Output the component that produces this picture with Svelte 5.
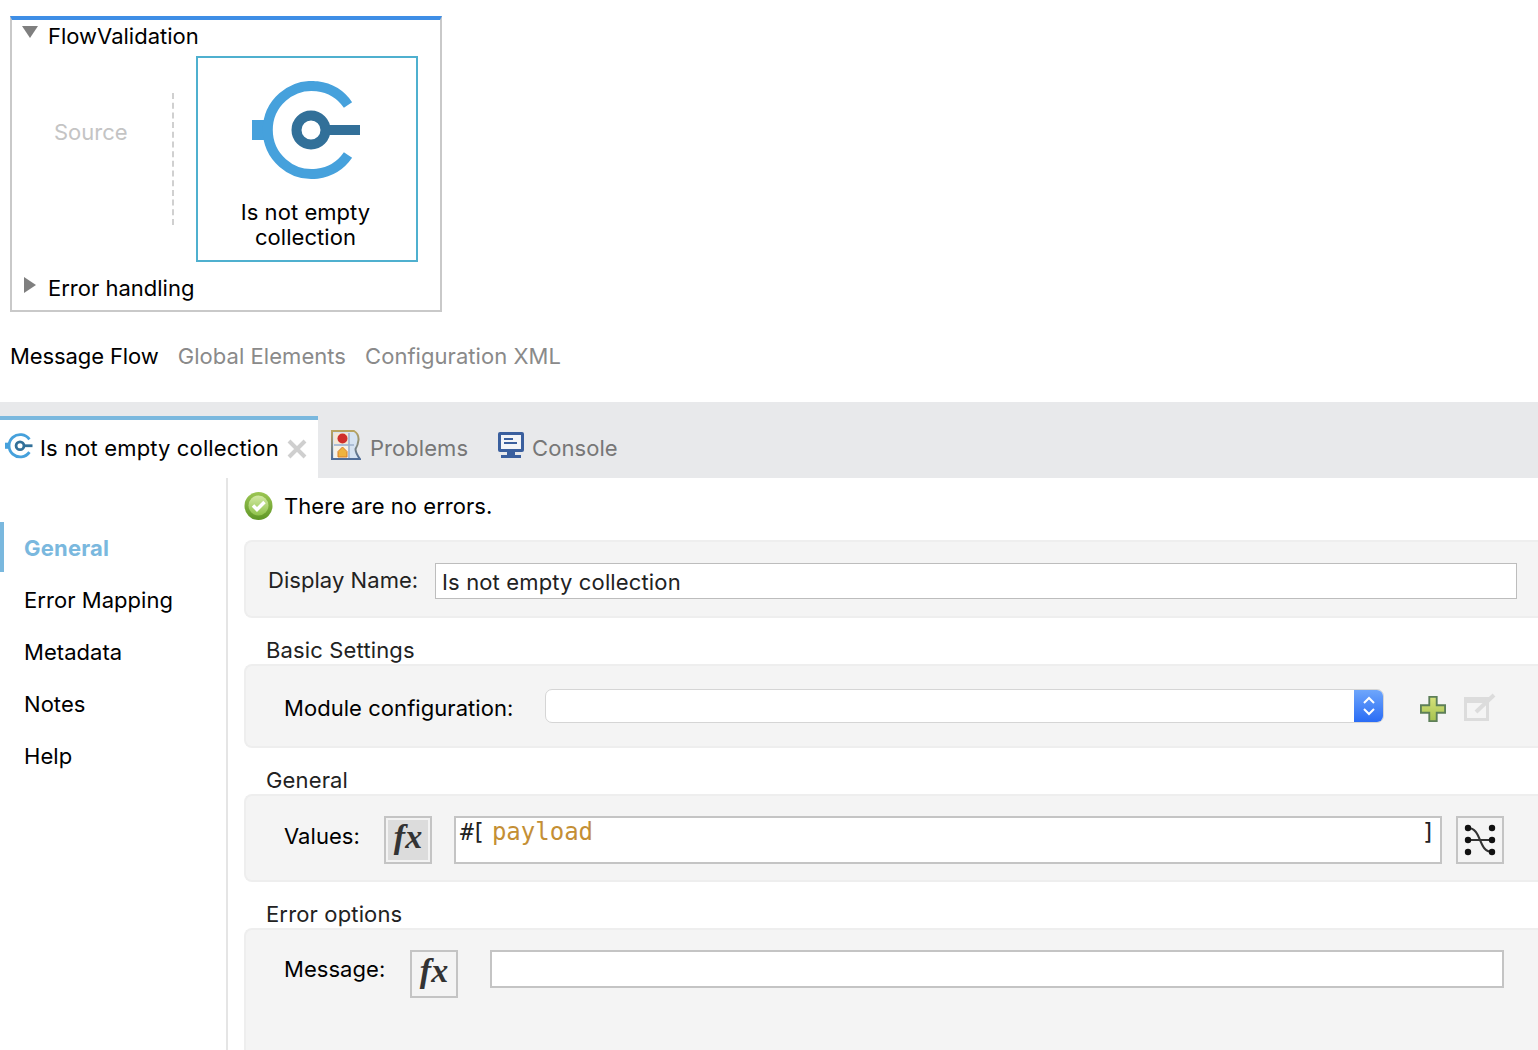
<script>
  const navItems = ["General", "Error Mapping", "Metadata", "Notes", "Help"];
</script>

<div class="page">
  <!-- flow canvas -->
  <div class="flow">
    <div class="flow-title">
      <svg class="tri" width="16" height="14" viewBox="0 0 16 14"><path d="M0 1h16L8 13z" fill="#7f7f7f" /></svg>
      <span>FlowValidation</span>
    </div>
    <div class="flow-body">
      <div class="source">Source</div>
      <div class="dashed"></div>
      <div class="node">
        <svg class="node-icon" width="110" height="100" viewBox="0 0 110 100">
          <rect x="0" y="39" width="12" height="20" fill="#46a1dc" />
          <path d="M96 24A44 44 0 1 0 96 74" fill="none" stroke="#46a1dc" stroke-width="10" />
          <circle cx="59" cy="49" r="14.500" fill="none" stroke="#327099" stroke-width="10" />
          <rect x="75" y="44" width="33" height="10" fill="#327099" />
        </svg>
        <div class="node-label">Is not empty<br />collection</div>
      </div>
    </div>
    <div class="flow-title error">
      <svg class="tri" width="14" height="16" viewBox="0 0 14 16"><path d="M1 0v16l12-8z" fill="#7f7f7f" /></svg>
      <span>Error handling</span>
    </div>
  </div>

  <div class="editor-tabs">
    <span class="active">Message Flow</span>
    <span>Global Elements</span>
    <span>Configuration XML</span>
  </div>

  <!-- properties panel -->
  <div class="tabbar">
    <div class="tab current">
      <svg class="tab-icon" width="28" height="26" viewBox="0 0 110 100">
        <rect x="0" y="37" width="14" height="24" fill="#46a1dc" />
        <path d="M96 24A44 44 0 1 0 96 74" fill="none" stroke="#46a1dc" stroke-width="11" />
        <circle cx="59" cy="49" r="15.500" fill="none" stroke="#327099" stroke-width="11" />
        <rect x="75" y="43.500" width="33" height="11" fill="#327099" />
      </svg>
      <span class="tab-label">Is not empty collection</span>
      <svg class="close" width="20" height="20" viewBox="0 0 20 20"><path d="M2 2l16 16M18 2L2 18" stroke="#cfcfcf" stroke-width="4" /></svg>
    </div>
    <div class="tab problems">
      <svg class="tab-icon" width="30" height="30" viewBox="0 0 30 30">
        <defs>
          <linearGradient id="probframe" x1="0" y1="0" x2="0" y2="1">
            <stop offset="0" stop-color="#b9a560" />
            <stop offset="1" stop-color="#4f6d99" />
          </linearGradient>
        </defs>
        <path d="M1 1h22q5 3 4.500 9-.5 5-3 9 0 4 4.500 10H1z" fill="#d6e3f1" stroke="url(#probframe)" stroke-width="2" />
        <rect x="3" y="3" width="14" height="11" fill="#f4e8d4" />
        <rect x="3" y="16" width="14" height="12" fill="#f7f2e6" />
        <path d="M18 3v25M3 15h20" stroke="#9fb3cc" stroke-width="1.500" />
        <circle cx="11.500" cy="8.500" r="5" fill="#cf2f2c" />
        <path d="M7 27v-5.500l4.500-4.500 4.500 4.500v5.500z" fill="#eeb33f" stroke="#d97f2a" stroke-width="1" />
      </svg>
      <span>Problems</span>
    </div>
    <div class="tab console">
      <svg class="tab-icon" width="28" height="28" viewBox="0 0 28 28">
        <rect x="1" y="1" width="26" height="20" rx="2" fill="#3a5f9e" />
        <rect x="4" y="4" width="20" height="14" fill="#f2f4f8" />
        <path d="M7 8h9M7 12h13" stroke="#3a5f9e" stroke-width="2" />
        <rect x="10" y="21" width="8" height="3" fill="#3a5f9e" />
        <rect x="4" y="24" width="20" height="3" fill="#3a5f9e" />
      </svg>
      <span>Console</span>
    </div>
  </div>

  <div class="panel">
    <nav class="sidebar">
      {#each navItems as item, i}
        <div class="nav-item" class:selected={i === 0}>{item}</div>
      {/each}
    </nav>

    <div class="content">
      <div class="status">
        <svg width="30" height="30" viewBox="0 0 30 30">
          <defs>
            <linearGradient id="okfill" x1="0" y1="0" x2="0" y2="1">
              <stop offset="0" stop-color="#9cc653" />
              <stop offset="1" stop-color="#5f9626" />
            </linearGradient>
            <linearGradient id="okinner" x1="0" y1="0" x2="0" y2="1">
              <stop offset="0" stop-color="#d3e9a4" />
              <stop offset="1" stop-color="#8fc24a" />
            </linearGradient>
          </defs>
          <circle cx="14.500" cy="15" r="14" fill="url(#okfill)" />
          <circle cx="14.500" cy="14.500" r="10" fill="url(#okinner)" />
          <path d="M9 14.500l4 4 7.500-7.500" fill="none" stroke="#fff" stroke-width="3.500" />
        </svg>
        <span>There are no errors.</span>
      </div>

      <section class="box name-box">
        <label class="name-label" for="display-name">Display Name:</label>
        <div class="text-input" id="display-name">Is not empty collection</div>
      </section>

      <h3>Basic Settings</h3>
      <section class="box module-box">
        <span class="field-label module-label">Module configuration:</span>
        <div class="select">
          <div class="select-btn">
            <svg width="16" height="24" viewBox="0 0 16 24"><path d="M3 9l5-5 5 5M3 15l5 5 5-5" fill="none" stroke="#fff" stroke-width="2" /></svg>
          </div>
        </div>
        <svg class="plus" width="26" height="26" viewBox="0 0 28 28">
          <defs>
            <linearGradient id="plusfill" x1="0" y1="0" x2="0" y2="1">
              <stop offset="0" stop-color="#d6e27c" />
              <stop offset="1" stop-color="#a6c24e" />
            </linearGradient>
          </defs>
          <path d="M10 1h8v9h9v8h-9v9h-8v-9H1v-8h9z" fill="url(#plusfill)" stroke="#5d7f58" stroke-width="2" />
        </svg>
        <svg class="edit" width="32" height="30" viewBox="0 0 32 30">
          <rect x="1.500" y="6.500" width="22" height="21" fill="none" stroke="#dcdcdc" stroke-width="3" />
          <rect x="1" y="6" width="23" height="5" fill="#dcdcdc" />
          <path d="M12 20L30 3" stroke="#dcdcdc" stroke-width="4" />
        </svg>
      </section>

      <h3>General</h3>
      <section class="box values-box">
        <span class="field-label values-label">Values:</span>
        <div class="fx pressed">fx</div>
        <div class="code">
          <span>#[<span class="kw">payload</span></span>
          <span>]</span>
        </div>
        <div class="map-btn">
          <svg width="34" height="34" viewBox="0 0 34 34">
            <path d="M5 17h24M5 5c14 0 10 24 24 24" fill="none" stroke="#333" stroke-width="2" />
            <g fill="#111">
              <circle cx="5" cy="5" r="3.200" /><circle cx="29" cy="5" r="3.200" />
              <circle cx="5" cy="17" r="3.200" /><circle cx="29" cy="17" r="3.200" />
              <circle cx="5" cy="29" r="3.200" /><circle cx="29" cy="29" r="3.200" />
            </g>
          </svg>
        </div>
      </section>

      <h3>Error options</h3>
      <section class="box error-box">
        <span class="field-label message-label">Message:</span>
        <div class="fx">fx</div>
        <div class="msg-input"></div>
      </section>
    </div>
  </div>
</div>

<style>
  :global(body) {
    margin: 0;
    background: #fff;
  }

  .page {
    width: 1538px;
    height: 1050px;
    overflow: hidden;
    font-family: Inter, "Liberation Sans", sans-serif;
    font-size: 22px;
    color: #000;
    letter-spacing: 0.05px;
    padding-top: 16px;
    box-sizing: border-box;
  }

  .flow {
    width: 432px;
    height: 296px;
    margin-left: 10px;
    box-sizing: border-box;
    border: 2px solid #c9c9c9;
    border-top: 4px solid #3e8ee6;
    display: flex;
    flex-direction: column;
    letter-spacing: 0;
  }

  .flow-title {
    display: flex;
    align-items: center;
    height: 30px;
    padding-left: 36px;
    position: relative;
  }

  .flow-title span {
    margin-top: 2px;
  }

  .tri {
    position: absolute;
    left: 10px;
    top: 5px;
  }

  .error .tri {
    left: 11px;
    top: 7px;
  }

  .flow-body {
    display: flex;
    height: 206px;
    margin-top: 6px;
  }

  .source {
    width: 160px;
    padding-left: 42px;
    box-sizing: border-box;
    color: #c4c4c4;
    padding-top: 63px;
    line-height: 26px;
  }

  .dashed {
    width: 0;
    height: 132px;
    margin-top: 37px;
    border-left: 2px dashed #d0d0d0;
  }

  .node {
    width: 222px;
    height: 206px;
    margin-left: 22px;
    box-sizing: border-box;
    border: 2px solid #4fb0cf;
    display: flex;
    flex-direction: column;
    align-items: center;
  }

  .node-icon {
    margin-top: 23px;
    flex-shrink: 0;
  }

  .node-label {
    margin-top: 19px;
    margin-right: 3px;
    text-align: center;
    line-height: 25px;
    letter-spacing: 0.05px;
  }

  .flow-body + .flow-title {
    margin-top: 8px;
    height: 34px;
  }

  .editor-tabs {
    display: flex;
    gap: 19px;
    margin-left: 10px;
    margin-top: 30px;
    line-height: 28px;
    color: #8a8a8a;
    height: 28px;
    letter-spacing: 0.05px;
  }

  .editor-tabs .active {
    color: #000;
    letter-spacing: -0.1px;
  }

  .tabbar {
    margin-top: 32px;
    height: 76px;
    background: #e8e9eb;
    padding-top: 14px;
    box-sizing: border-box;
    display: flex;
    color: #777;
  }

  .tab {
    display: flex;
    align-items: center;
    gap: 8px;
    height: 58px;
    padding-left: 12px;
    padding-right: 17px;
    padding-top: 6px;
    box-sizing: border-box;
  }

  .tab-icon {
    flex-shrink: 0;
  }

  .problems {
    gap: 9px;
  }

  .problems .tab-icon {
    margin-top: -7px;
    margin-left: -1px;
  }

  .console {
    gap: 7px;
  }

  .console .tab-icon {
    margin-top: -7px;
  }

  .tab.current {
    width: 318px;
    height: 62px;
    background: #fff;
    border-top: 4px solid #7ab8de;
    color: #000;
    padding: 0 0 0 4px;
    gap: 8px;
    margin-right: 2px;
  }

  .current .tab-icon {
    margin-top: -7px;
    margin-left: 1px;
    margin-right: -1px;
  }

  .tab-label {
    white-space: nowrap;
    margin-top: -2px;
    letter-spacing: 0.14px;
  }

  .close {
    margin-top: -1px;
  }

  .panel {
    display: flex;
    height: 572px;
  }

  .sidebar {
    width: 228px;
    flex-shrink: 0;
    box-sizing: border-box;
    border-right: 2px solid #e5e5e5;
    padding-top: 44px;
  }

  .nav-item {
    height: 52px;
    line-height: 52px;
    padding-left: 24px;
  }

  .nav-item.selected {
    color: #7ab8de;
    font-weight: 700;
    letter-spacing: 0.2px;
    height: 50px;
    line-height: 52px;
    margin-bottom: 2px;
    box-shadow: inset 4px 0 0 #7ab8de;
  }

  .content {
    flex: 1;
    padding-left: 16px;
    min-width: 0;
  }

  .status {
    display: flex;
    align-items: center;
    gap: 10px;
    height: 30px;
    margin-top: 13px;
    margin-bottom: 19px;
  }

  .box {
    background: #f4f4f4;
    border: 2px solid #eeeeee;
    border-right: none;
    border-radius: 8px 0 0 8px;
    box-sizing: border-box;
    display: flex;
    align-items: center;
  }

  h3 {
    margin: 0;
    font-size: 22px;
    font-weight: 400;
    line-height: 28px;
    padding-left: 22px;
    color: #222;
    letter-spacing: 0.15px;
  }

  .name-box {
    height: 78px;
    margin-bottom: 18px;
    padding-left: 22px;
  }

  .name-label {
    width: 167px;
    flex-shrink: 0;
    margin-top: 2px;
    color: #222;
  }

  .text-input {
    width: 1082px;
    height: 36px;
    line-height: 36px;
    box-sizing: border-box;
    background: #fff;
    border: 1px solid #bdbdbd;
    padding-left: 6px;
    margin-top: 4px;
    color: #222;
    letter-spacing: 0.14px;
  }

  .field-label {
    flex-shrink: 0;
    padding-left: 38px;
  }

  .module-box {
    height: 84px;
    margin-bottom: 18px;
  }

  .module-label {
    width: 299px;
    box-sizing: border-box;
    margin-top: 4px;
  }

  .select {
    width: 839px;
    height: 34px;
    background: #fff;
    border-radius: 7px;
    border: 1px solid #d5d5d5;
    box-sizing: border-box;
    display: flex;
    justify-content: flex-end;
    overflow: hidden;
  }

  .select-btn {
    width: 29px;
    background: linear-gradient(#6ea6fb, #2a6cf5);
    display: flex;
    align-items: center;
    justify-content: center;
  }

  .plus {
    margin-left: 36px;
    margin-top: 6px;
  }

  .edit {
    margin-left: 18px;
    margin-top: 2px;
  }

  .values-box {
    height: 88px;
    margin-bottom: 18px;
  }

  .values-label {
    width: 138px;
    box-sizing: border-box;
    margin-top: -4px;
  }

  .fx {
    width: 48px;
    height: 48px;
    box-sizing: border-box;
    border: 2px solid #c4c4c4;
    flex-shrink: 0;
    font-family: "Liberation Serif", serif;
    font-style: italic;
    font-weight: 700;
    font-size: 34px;
    text-align: center;
    line-height: 38px;
    color: #333;
    letter-spacing: 0;
  }

  .values-box .fx {
    margin-top: 4px;
  }

  .fx.pressed {
    background: #dcdcdc;
    box-shadow: inset 0 0 0 2px #f3f3f3;
  }

  .code {
    width: 988px;
    height: 48px;
    margin-left: 22px;
    margin-top: 4px;
    box-sizing: border-box;
    background: #fff;
    border: 2px solid #c4c4c4;
    display: flex;
    justify-content: space-between;
    padding: 1px 7px 0 4px;
    font-family: "DejaVu Sans Mono", monospace;
    font-size: 23px;
    line-height: 26px;
    letter-spacing: -2.4px;
    color: #222;
    flex-shrink: 0;
  }

  .kw {
    font-size: 24px;
    color: #c48f35;
    margin-left: 9px;
    letter-spacing: 0;
  }

  .map-btn {
    width: 48px;
    height: 48px;
    margin-left: 14px;
    margin-top: 4px;
    box-sizing: border-box;
    border: 2px solid #c4c4c4;
    display: flex;
    align-items: center;
    justify-content: center;
    flex-shrink: 0;
  }

  .error-box {
    height: 160px;
    align-items: flex-start;
    padding-top: 20px;
  }

  .message-label {
    width: 164px;
    box-sizing: border-box;
    line-height: 38px;
  }

  .msg-input {
    width: 1014px;
    height: 38px;
    margin-left: 32px;
    box-sizing: border-box;
    background: #fff;
    border: 2px solid #c4c4c4;
  }
</style>
